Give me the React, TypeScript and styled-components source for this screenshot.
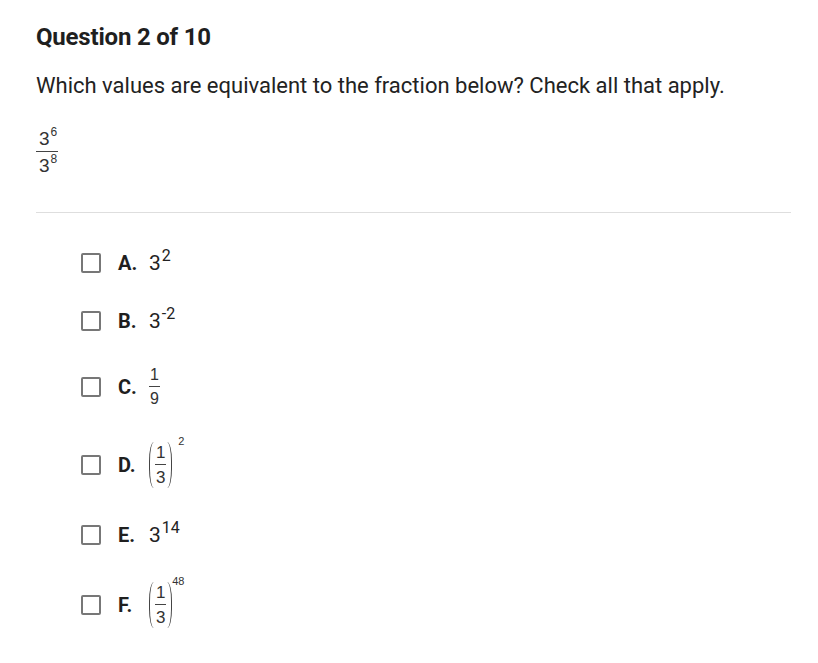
import React from "react";
import styled, { createGlobalStyle } from "styled-components";

const GlobalStyle = createGlobalStyle`
  html, body {
    margin: 0;
    padding: 0;
    background: #fff;
  }
  body {
    font-family: Roboto, "Liberation Sans", Arial, sans-serif;
    color: #222;
  }
`;

type Option = {
  letter: string;
  value: React.ReactNode;
};

const Power = ({ base, exp }: { base: React.ReactNode; exp: string }) => (
  <PowerWrap>
    {base}
    <Sup>{exp}</Sup>
  </PowerWrap>
);

const Frac = ({ top, bottom, size }: { top: React.ReactNode; bottom: React.ReactNode; size: number }) => (
  <FracWrap $size={size}>
    <FracPart>{top}</FracPart>
    <FracPart $bottom>{bottom}</FracPart>
  </FracWrap>
);

const ParenPower = ({ exp }: { exp: string }) => (
  <ParenWrap>
    <Paren $side="left" />
    <Frac top="1" bottom="3" size={17} />
    <Paren $side="right" />
    <ParenExp>{exp}</ParenExp>
  </ParenWrap>
);

const options: Option[] = [
  { letter: "A.", value: <Power base="3" exp="2" /> },
  { letter: "B.", value: <Power base="3" exp="-2" /> },
  { letter: "C.", value: <Frac top="1" bottom="9" size={16} /> },
  { letter: "D.", value: <ParenPower exp="2" /> },
  { letter: "E.", value: <Power base="3" exp="14" /> },
  { letter: "F.", value: <ParenPower exp="48" /> },
];

export default function App() {
  return (
    <Page>
      <GlobalStyle />
      <Title>Question 2 of 10</Title>
      <Prompt>Which values are equivalent to the fraction below? Check all that apply.</Prompt>
      <Given>
        <Frac
          size={19}
          top={<SmallPow>3<SmallSup>6</SmallSup></SmallPow>}
          bottom={<SmallPow>3<SmallSup>8</SmallSup></SmallPow>}
        />
      </Given>
      <Divider />
      <OptionList>
        {options.map((opt) => (
          <OptionRow key={opt.letter}>
            <Checkbox />
            <Letter>{opt.letter}</Letter>
            <Value>{opt.value}</Value>
          </OptionRow>
        ))}
      </OptionList>
    </Page>
  );
}

const Page = styled.div`
  padding: 23px 27px 0 36px;
`;

const Title = styled.h1`
  margin: 0;
  font-size: 24px;
  font-weight: 700;
  line-height: 28px;
  letter-spacing: -0.2px;
  color: #1f1f1f;
`;

const Prompt = styled.p`
  margin: 21px 0 0;
  font-size: 22px;
  line-height: 28px;
  color: #222;
`;

const Given = styled.div`
  margin-top: 29px;
  display: flex;
`;

const Divider = styled.div`
  margin-top: 37px;
  height: 1px;
  background: #dedede;
`;

const OptionList = styled.div`
  display: flex;
  flex-direction: column;
  gap: 34px;
  padding: 38px 0 0 45px;
`;

const OptionRow = styled.div`
  display: flex;
  align-items: center;
  min-height: 24px;
`;

const Checkbox = styled.span`
  box-sizing: border-box;
  width: 20px;
  height: 20px;
  border: 2px solid #777;
  border-radius: 2px;
  flex-shrink: 0;
`;

const Letter = styled.span`
  margin-left: 17px;
  width: 31px;
  font-size: 20px;
  font-weight: 700;
  color: #1f1f1f;
`;

const Value = styled.span`
  display: flex;
  align-items: center;
  font-size: 21px;
  color: #222;
`;

const PowerWrap = styled.span`
  display: inline-flex;
  align-items: flex-start;
  line-height: 24px;
`;

const Sup = styled.span`
  font-size: 16px;
  line-height: 16px;
  margin-top: -3px;
  margin-left: 1px;
`;

const FracWrap = styled.span<{ $size: number }>`
  display: inline-flex;
  flex-direction: column;
  align-items: center;
  font-family: "Liberation Sans", Arial, sans-serif;
  font-size: ${(p) => p.$size}px;
  line-height: ${(p) => p.$size}px;
  color: #333;
`;

const FracPart = styled.span<{ $bottom?: boolean }>`
  padding: ${(p) => (p.$bottom ? "4px 1px 0" : "0 1px 3px")};
  ${(p) => (p.$bottom ? "" : "border-bottom: 1.5px solid #444;")}
  align-self: stretch;
  text-align: center;
`;

const SmallPow = styled.span`
  display: inline-flex;
  align-items: flex-start;
  padding-left: 2px;
`;

const SmallSup = styled.span`
  font-size: 12px;
  line-height: 12px;
  margin-top: -3px;
  margin-left: 1px;
`;

const ParenWrap = styled.span`
  display: inline-flex;
  align-items: center;
  position: relative;
  height: 48px;
  padding-right: 12px;
`;

const Paren = styled.span<{ $side: "left" | "right" }>`
  width: 5px;
  height: 46px;
  box-sizing: border-box;
  ${(p) =>
    p.$side === "left"
      ? "border-left: 1.5px solid #444; border-radius: 6px 0 0 6px / 23px 0 0 23px; margin-right: 1px;"
      : "border-right: 1.5px solid #444; border-radius: 0 6px 6px 0 / 0 23px 23px 0; margin-left: 1px;"}
`;

const ParenExp = styled.span`
  position: absolute;
  right: 0;
  top: -6px;
  font-family: "Liberation Sans", Arial, sans-serif;
  font-size: 11px;
  color: #333;
`;
